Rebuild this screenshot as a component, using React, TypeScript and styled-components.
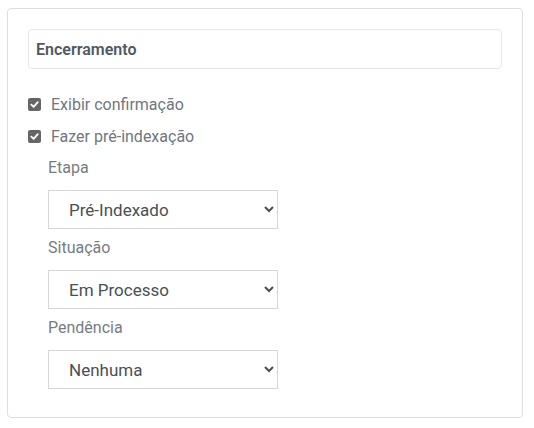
import React from "react";
import styled, { createGlobalStyle } from "styled-components";

const GlobalStyle = createGlobalStyle`
    body {
        margin: 0;
        background: #fff;
        font-family: Roboto, "Liberation Sans", sans-serif;
    }
`;

const Page = styled.div`
    padding: 8px 11px 10px 7px;
`;

const Card = styled.div`
    border: 1px solid #dedede;
    border-radius: 4px;
    padding: 20px 20px 21px 20px;
`;

const Heading = styled.div`
    height: 38px;
    border: 1px solid #e6e6e6;
    border-radius: 4px;
    display: flex;
    align-items: center;
    padding-left: 7px;
    font-size: 16px;
    font-weight: 600;
    color: #4f5962;
    margin-bottom: 19px;
`;

const CheckRow = styled.label`
    display: flex;
    align-items: center;
    height: 32px;
    gap: 10px;
    font-size: 16px;
    color: #707780;
`;

const Box = styled.span`
    width: 13px;
    height: 13px;
    border-radius: 2px;
    background: #666;
    display: inline-flex;
    align-items: center;
    justify-content: center;
`;

const Fields = styled.div`
    padding-left: 20px;
    padding-top: 4px;
`;

const FieldLabel = styled.div`
    height: 24px;
    line-height: 24px;
    font-size: 16px;
    color: #767c82;
    margin-bottom: 10px;
`;

const Select = styled.select`
    width: 230px;
    height: 39px;
    border: 1px solid #d6d6d6;
    border-radius: 0;
    background: #fff;
    padding: 0 12px 0 16px;
    font-family: inherit;
    font-size: 17px;
    color: #4a4f54;
    margin-bottom: 7px;
    outline: none;
`;

const Check = ({ label }: { label: string }) => (
    <CheckRow>
        <Box>
            <svg width="9" height="9" viewBox="0 0 10 10">
                <path d="M1.5 5.2 L4 7.6 L8.6 2.4" fill="none" stroke="#fff" strokeWidth="2" strokeLinecap="round" strokeLinejoin="round" />
            </svg>
        </Box>
        {label}
    </CheckRow>
);

const fields = [
    { label: "Etapa", value: "Pré-Indexado" },
    { label: "Situação", value: "Em Processo" },
    { label: "Pendência", value: "Nenhuma" },
];

const App = () => {
    return (
        <Page>
            <GlobalStyle />
            <Card>
                <Heading>Encerramento</Heading>
                <Check label="Exibir confirmação" />
                <Check label="Fazer pré-indexação" />
                <Fields>
                    {fields.map((f) => (
                        <div key={f.label}>
                            <FieldLabel>{f.label}</FieldLabel>
                            <Select defaultValue={f.value}>
                                <option>{f.value}</option>
                            </Select>
                        </div>
                    ))}
                </Fields>
            </Card>
        </Page>
    );
};

export default App;
